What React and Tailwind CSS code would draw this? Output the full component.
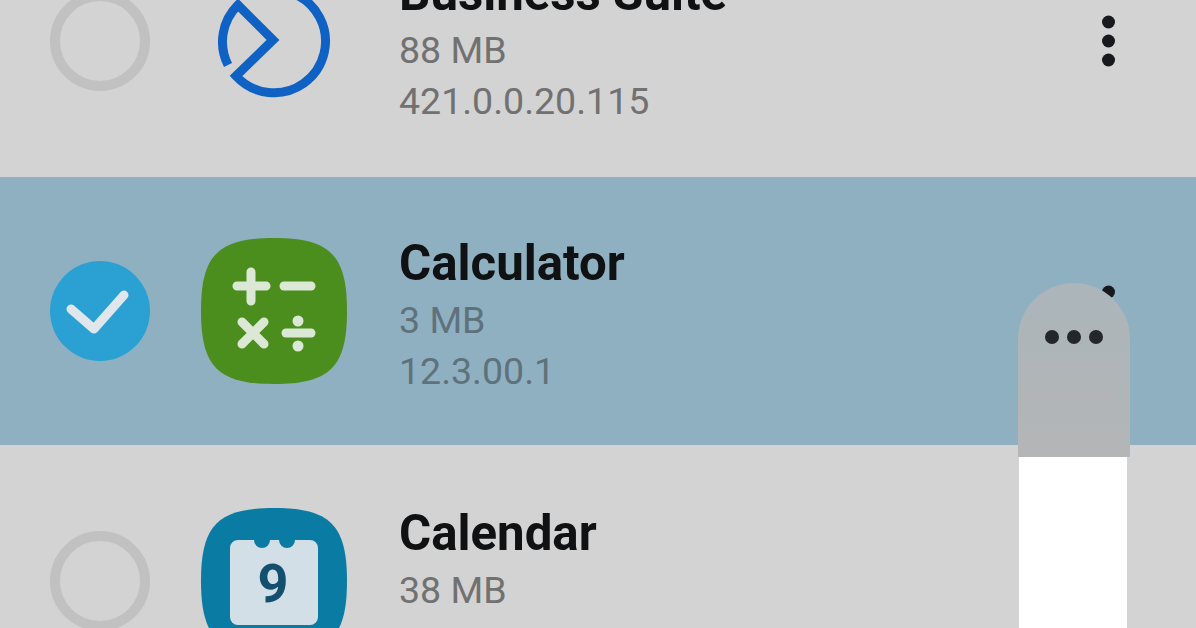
const Radio = ({ checked }) =>
  checked ? (
    <div className="w-[100px] h-[100px] rounded-full bg-[#2ba1d3] flex items-center justify-center shrink-0">
      <svg width="100" height="100" viewBox="0 0 100 100">
        <path d="M21 48 L44 68 L74 34" fill="none" stroke="#dfe6ec" strokeWidth="9" strokeLinecap="round" strokeLinejoin="round" />
      </svg>
    </div>
  ) : (
    <div className="w-[100px] h-[100px] rounded-full border-[10px] border-[#c1c1c1] shrink-0" />
  );

const Kebab = () => (
  <div className="absolute left-[1102px] top-1/2 -translate-y-1/2 flex flex-col gap-[6px]">
    <span className="w-[13px] h-[13px] rounded-full bg-[#17191c]" />
    <span className="w-[13px] h-[13px] rounded-full bg-[#17191c]" />
    <span className="w-[13px] h-[13px] rounded-full bg-[#17191c]" />
  </div>
);

const BusinessIcon = () => (
  <svg width="146" height="146" viewBox="0 0 146 146" fill="none">
    <path
      d="M27 97 A51.5 51.5 0 0 1 37 37 L72 72 L35 108 A51.5 51.5 0 1 0 55 25"
      stroke="#0f62c4"
      strokeWidth="9"
      strokeLinejoin="miter"
    />
  </svg>
);

const SQUIRCLE = "M73 0 C129 0 146 17 146 73 C146 129 129 146 73 146 C17 146 0 129 0 73 C0 17 17 0 73 0 Z";

const CalcIcon = () => (
  <svg width="146" height="146" viewBox="0 0 146 146">
    <path d={SQUIRCLE} fill="#4b8e1e" />
    <g stroke="#dce8d6" strokeWidth="9" strokeLinecap="round">
      <path d="M36 48 H65 M50 34 V63" />
      <path d="M83 48 H110" />
      <path d="M41 84 L63 106 M63 84 L41 106" />
      <path d="M85 95 H110" />
    </g>
    <circle cx="97" cy="83" r="5.5" fill="#dce8d6" />
    <circle cx="97" cy="108" r="5.5" fill="#dce8d6" />
  </svg>
);

const CalendarIcon = () => (
  <svg width="146" height="146" viewBox="0 0 146 146">
    <path d={SQUIRCLE} fill="#0a7ca3" />
    <path d="M37 32 H53 A8 8 0 0 0 69 32 H78 A8 8 0 0 0 94 32 H109 A8 8 0 0 1 117 40 V109 A8 8 0 0 1 109 117 H37 A8 8 0 0 1 29 109 V40 A8 8 0 0 1 37 32 Z" fill="#d3dfe7" />
    <text x="72" y="94" textAnchor="middle" fontFamily="Roboto, sans-serif" fontWeight="700" fontSize="54" fill="#13506f">9</text>
  </svg>
);

const Row = ({ name, size, version, checked, icon }) => {
  const sub = checked ? "text-[#5f727c]" : "text-[#717171]";
  return (
    <div className={`relative h-[268px] flex items-center pl-[50px] ${checked ? "bg-[#8fb0c1]" : ""}`}>
      <Radio checked={checked} />
      <div className="ml-[51px] w-[146px] h-[146px] shrink-0">{icon}</div>
      <div className="ml-[52px] pt-[10px] flex flex-col">
        <div className="text-[49.2px] leading-[56px] font-bold text-[#0f1113] whitespace-nowrap">{name}</div>
        <div className={`text-[37.5px] leading-[51px] mt-[4.5px] whitespace-nowrap ${sub}`}>{size}</div>
        <div className={`text-[37.5px] leading-[51px] whitespace-nowrap ${sub}`}>{version}</div>
      </div>
      <Kebab />
    </div>
  );
};

export default function App() {
  return (
    <div className="relative w-[1196px] h-[628px] overflow-hidden bg-[#d3d3d3] font-['Roboto',sans-serif]">
      <div className="-mt-[93px] flex flex-col gap-[2px]">
        <Row name="Business Suite" size="88 MB" version="421.0.0.20.115" icon={<BusinessIcon />} />
        <Row name="Calculator" size="3 MB" version="12.3.00.1" checked icon={<CalcIcon />} />
        <Row name="Calendar" size="38 MB" version="12.3.00.11" icon={<CalendarIcon />} />
      </div>
      <div className="absolute left-[1018px] top-[283px] w-[112px] flex flex-col">
        <div className="w-full h-[174px] bg-gradient-to-b from-[#abb5ba] to-[#b4b5b7] rounded-t-[56px] flex justify-center gap-[8px] pt-[47px]">
          <span className="w-[14px] h-[14px] rounded-full bg-[#23272a]" />
          <span className="w-[14px] h-[14px] rounded-full bg-[#23272a]" />
          <span className="w-[14px] h-[14px] rounded-full bg-[#23272a]" />
        </div>
        <div className="ml-[1px] w-[108px] h-[171px] bg-white" />
      </div>
    </div>
  );
}
